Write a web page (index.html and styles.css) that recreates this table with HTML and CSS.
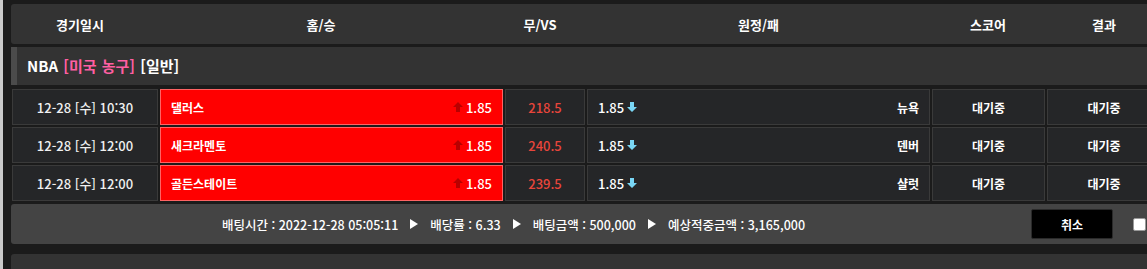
FILE: index.html
```html
<!DOCTYPE html>
<html lang="ko">
<head>
<meta charset="utf-8">
<title>Bet history</title>
<link rel="stylesheet" href="styles.css">
</head>
<body>
<div class="page">
  <section class="bet">
    <div class="thead">
      <div>경기일시</div><div>홈/승</div><div>무/VS</div><div>원정/패</div><div>스코어</div><div>결과</div>
    </div>
    <div class="league">NBA <span class="pink">[미국 농구]</span> [일반]</div>
    <div class="rows">
      <div class="row">
        <div class="cell time">12-28 [수] 10:30</div>
        <div class="cell home"><span class="team">댈러스</span><span class="odd"><svg class="arr" width="10" height="10" viewBox="0 0 10 10"><path d="M5 0L10 5H7V10H3V5H0Z" fill="#b80000"/></svg>1.85</span></div>
        <div class="cell vs">218.5</div>
        <div class="cell away"><span class="odd">1.85<svg class="arr" width="10" height="10" viewBox="0 0 10 10"><path d="M5 10L10 5H7V0H3V5H0Z" fill="#79d6f5"/></svg></span><span class="team">뉴욕</span></div>
        <div class="cell status">대기중</div>
        <div class="cell status">대기중</div>
      </div>
      <div class="row">
        <div class="cell time">12-28 [수] 12:00</div>
        <div class="cell home"><span class="team">새크라멘토</span><span class="odd"><svg class="arr" width="10" height="10" viewBox="0 0 10 10"><path d="M5 0L10 5H7V10H3V5H0Z" fill="#b80000"/></svg>1.85</span></div>
        <div class="cell vs">240.5</div>
        <div class="cell away"><span class="odd">1.85<svg class="arr" width="10" height="10" viewBox="0 0 10 10"><path d="M5 10L10 5H7V0H3V5H0Z" fill="#79d6f5"/></svg></span><span class="team">덴버</span></div>
        <div class="cell status">대기중</div>
        <div class="cell status">대기중</div>
      </div>
      <div class="row">
        <div class="cell time">12-28 [수] 12:00</div>
        <div class="cell home"><span class="team">골든스테이트</span><span class="odd"><svg class="arr" width="10" height="10" viewBox="0 0 10 10"><path d="M5 0L10 5H7V10H3V5H0Z" fill="#b80000"/></svg>1.85</span></div>
        <div class="cell vs">239.5</div>
        <div class="cell away"><span class="odd">1.85<svg class="arr" width="10" height="10" viewBox="0 0 10 10"><path d="M5 10L10 5H7V0H3V5H0Z" fill="#79d6f5"/></svg></span><span class="team">샬럿</span></div>
        <div class="cell status">대기중</div>
        <div class="cell status">대기중</div>
      </div>
    </div>
    <div class="summary">
      <div class="info">
        <span>배팅시간 : 2022-12-28 05:05:11</span>
        <svg class="tri" width="8" height="10" viewBox="0 0 8 10"><path d="M0 0L8 5L0 10Z" fill="#fff"/></svg>
        <span>배당률 : 6.33</span>
        <svg class="tri" width="8" height="10" viewBox="0 0 8 10"><path d="M0 0L8 5L0 10Z" fill="#fff"/></svg>
        <span>배팅금액 : 500,000</span>
        <svg class="tri" width="8" height="10" viewBox="0 0 8 10"><path d="M0 0L8 5L0 10Z" fill="#fff"/></svg>
        <span>예상적중금액 : 3,165,000</span>
      </div>
      <button class="cancel" type="button">취소</button>
      <input class="check" type="checkbox">
    </div>
  </section>
  <section class="bet">
    <div class="thead">
      <div>경기일시</div><div>홈/승</div><div>무/VS</div><div>원정/패</div><div>스코어</div><div>결과</div>
    </div>
  </section>
</div>
</body>
</html>
```

FILE: styles.css
```css
html, body {
  margin: 0;
  padding: 0;
  overflow: hidden;
}
body {
  background: #1b1b1b;
  border-left: 3px solid #c9c9c9;
  font-family: "Noto Sans CJK KR", "Noto Sans", sans-serif;
  color: #f2f2f2;
}
.page {
  width: 1151px;
  padding: 4px 0 0 8px;
}
.bet {
  margin-bottom: 10px;
}
.thead {
  display: grid;
  grid-template-columns: 138px 344px 94px 343px 116px 116px;
  height: 40px;
  align-items: center;
  background: #333;
  border-radius: 3px;
  font-size: 13px;
  font-weight: bold;
  color: #fff;
  text-align: center;
  margin-bottom: 3px;
}
.league {
  height: 38px;
  line-height: 38px;
  background: #333;
  border-left: 6px solid #4b4b4b;
  padding-left: 10px;
  font-size: 15px;
  font-weight: bold;
  color: #fff;
  word-spacing: 1px;
  margin-bottom: 4px;
}
.pink {
  color: #ff5fa2;
}
.rows {
  display: flex;
  flex-direction: column;
  gap: 2px;
  padding: 0 1px;
}
.row {
  display: grid;
  grid-template-columns: 146px 343px 80px 343px 113px 114px;
  gap: 2px;
  height: 36px;
}
.cell {
  box-sizing: border-box;
  background: #252628;
  border: 1px solid #3a3a3a;
  display: flex;
  align-items: center;
  font-size: 12px;
}
.time {
  justify-content: center;
  color: #f0f0f0;
  font-size: 13px;
  font-weight: 500;
}
.home {
  background: #ff0000;
  border-color: #ff6464;
  justify-content: space-between;
  padding: 0 10px;
  color: #fff;
}
.team {
  font-weight: bold;
}
.odd {
  display: flex;
  align-items: center;
  gap: 3px;
  font-size: 13px;
  font-weight: 500;
}
.vs {
  justify-content: center;
  color: #e8453b;
  font-size: 13px;
  font-weight: 500;
}
.away {
  justify-content: space-between;
  padding: 0 10px;
  color: #fff;
}
.status {
  justify-content: center;
  font-weight: bold;
  color: #fff;
}
.summary {
  margin-top: 3px;
  height: 40px;
  display: flex;
  align-items: center;
  background: #444;
  border-radius: 3px;
}
.info {
  flex: 1;
  display: flex;
  justify-content: center;
  align-items: center;
  gap: 12px;
  font-size: 12.5px;
  font-weight: 500;
  color: #fff;
}
.cancel {
  width: 82px;
  height: 30px;
  margin-left: 15px;
  background: #000;
  border: 1px solid #2a2a2a;
  border-radius: 2px;
  color: #fff;
  font-family: inherit;
  font-size: 12px;
  font-weight: bold;
}
.check {
  appearance: none;
  width: 13px;
  height: 13px;
  margin: 0 16px 0 20px;
  background: #fff;
  border: 1px solid #999;
  border-radius: 2px;
  box-sizing: border-box;
}
```
